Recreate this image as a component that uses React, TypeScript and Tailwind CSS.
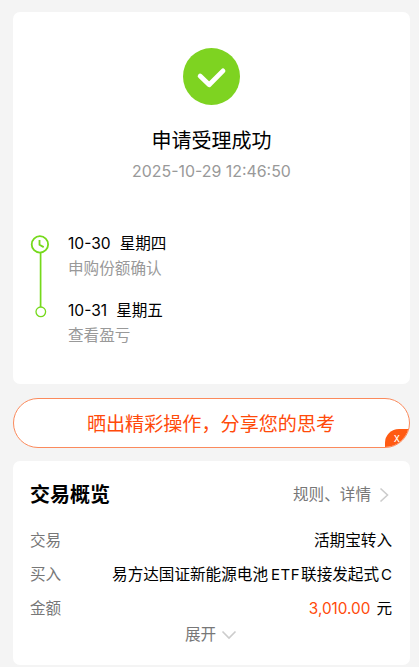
import type { ReactNode } from "react";

function SuccessIcon() {
  return (
    <svg className="block size-[58px]" viewBox="0 0 58 58" fill="none">
      <circle cx="28.5" cy="28.5" r="28.5" fill="#7ed321" />
      <path d="M17.1 28.1L26.2 36.7L40 22.9" stroke="#fff" strokeWidth="4.8" strokeLinecap="round" strokeLinejoin="round" />
    </svg>
  );
}

function TimelineRail() {
  return (
    <svg className="block h-[86px] w-5 shrink-0" viewBox="0 0 20 86" fill="none" stroke="#75d91b">
      <path d="M10.6 18V73" strokeWidth="1.7" />
      <circle cx="9.9" cy="10.4" r="8.2" strokeWidth="1.8" />
      <path d="M9.5 6V10.8L13.7 13.1" strokeWidth="1.8" />
      <circle cx="10.8" cy="77.8" r="4.8" strokeWidth="1.3" />
    </svg>
  );
}

function Step({ date, day, note }: { date: string; day: string; note: string }) {
  return (
    <div className="h-[67px]">
      <div className="flex h-[25px] items-center gap-[9px] leading-[25px] text-black">
        <span className="text-[15.6px]">{date}</span>
        <span>{day}</span>
      </div>
      <div className="h-[25px] leading-[25px] text-[#999]">{note}</div>
    </div>
  );
}

function Row({ label, children }: { label: string; children: ReactNode }) {
  return (
    <div className="flex h-[34px] items-center justify-between whitespace-nowrap leading-[34px]">
      <span className="text-[#777]">{label}</span>
      <span className="text-black">{children}</span>
    </div>
  );
}

export default function App() {
  return (
    <main className="flex h-[667px] w-[419px] flex-col overflow-hidden bg-[#f4f4f4] pt-3 pr-[9px] pl-[13px] font-['Inter','Noto_Sans_CJK_SC',sans-serif] text-[15.6px]">
      <section className="flex h-[372px] shrink-0 flex-col items-center rounded-[7px] bg-white pt-9">
        <SuccessIcon />
        <h1 className="mt-5 h-[30px] text-[20px] leading-[30px] text-black">申请受理成功</h1>
        <p className="mt-1 h-[24px] text-[15.9px] leading-[24px] text-[#999]">2025-10-29 12:46:50</p>
        <div className="mt-[47px] flex w-full gap-[18px] pl-[17px]">
          <div className="pt-[3px]">
            <TimelineRail />
          </div>
          <div>
            <Step date="10-30" day="星期四" note="申购份额确认" />
            <Step date="10-31" day="星期五" note="查看盈亏" />
          </div>
        </div>
      </section>

      <section className="relative mt-[14px] flex h-[50px] shrink-0 items-center justify-center overflow-hidden rounded-full border border-[#fb8a5c] bg-white pt-0.5 pr-px text-[19.1px] text-[#ff4a0a]">
        晒出精彩操作，分享您的思考
        <button className="absolute right-0 -bottom-px flex h-[19px] w-6 items-center justify-center rounded-tl-[14px] bg-[#ff5a12] text-[11.5px] text-white">
          x
        </button>
      </section>

      <section className="mt-[13px] h-[204px] shrink-0 rounded-[7px] bg-white pt-[19px] pr-[18px] pl-[17px]">
        <div className="flex h-[30px] items-center justify-between">
          <h2 className="text-[20px] font-bold text-black">交易概览</h2>
          <div className="flex items-center gap-2 text-[#777]">
            规则、详情
            <svg className="mr-[3px] block h-4 w-[10px]" viewBox="0 0 10 16" fill="none">
              <path d="M1.5 1.5L8.5 8L1.5 14.5" stroke="#ccc" strokeWidth="1.6" />
            </svg>
          </div>
        </div>
        <div className="mt-[14px]">
          <Row label="交易">活期宝转入</Row>
          <Row label="买入">
            易方达国证新能源电池<span className="mr-px ml-[3px] text-[15px] tracking-[0.5px]">ETF</span>联接发起式<span className="ml-[2px] text-[15px]">C</span>
          </Row>
          <Row label="金额">
            <span className="mr-1.5 text-[15.3px] text-[#ff4a0a]">3,010.00</span>元
          </Row>
        </div>
        <div className="-mt-px flex h-[20px] items-center justify-center gap-[5px] leading-[20px] text-[#777]">
          展开
          <svg className="block h-[10px] w-4" viewBox="0 0 16 10" fill="none">
            <path d="M1.5 1.5L8 8L14.5 1.5" stroke="#ccc" strokeWidth="1.6" />
          </svg>
        </div>
      </section>
    </main>
  );
}
